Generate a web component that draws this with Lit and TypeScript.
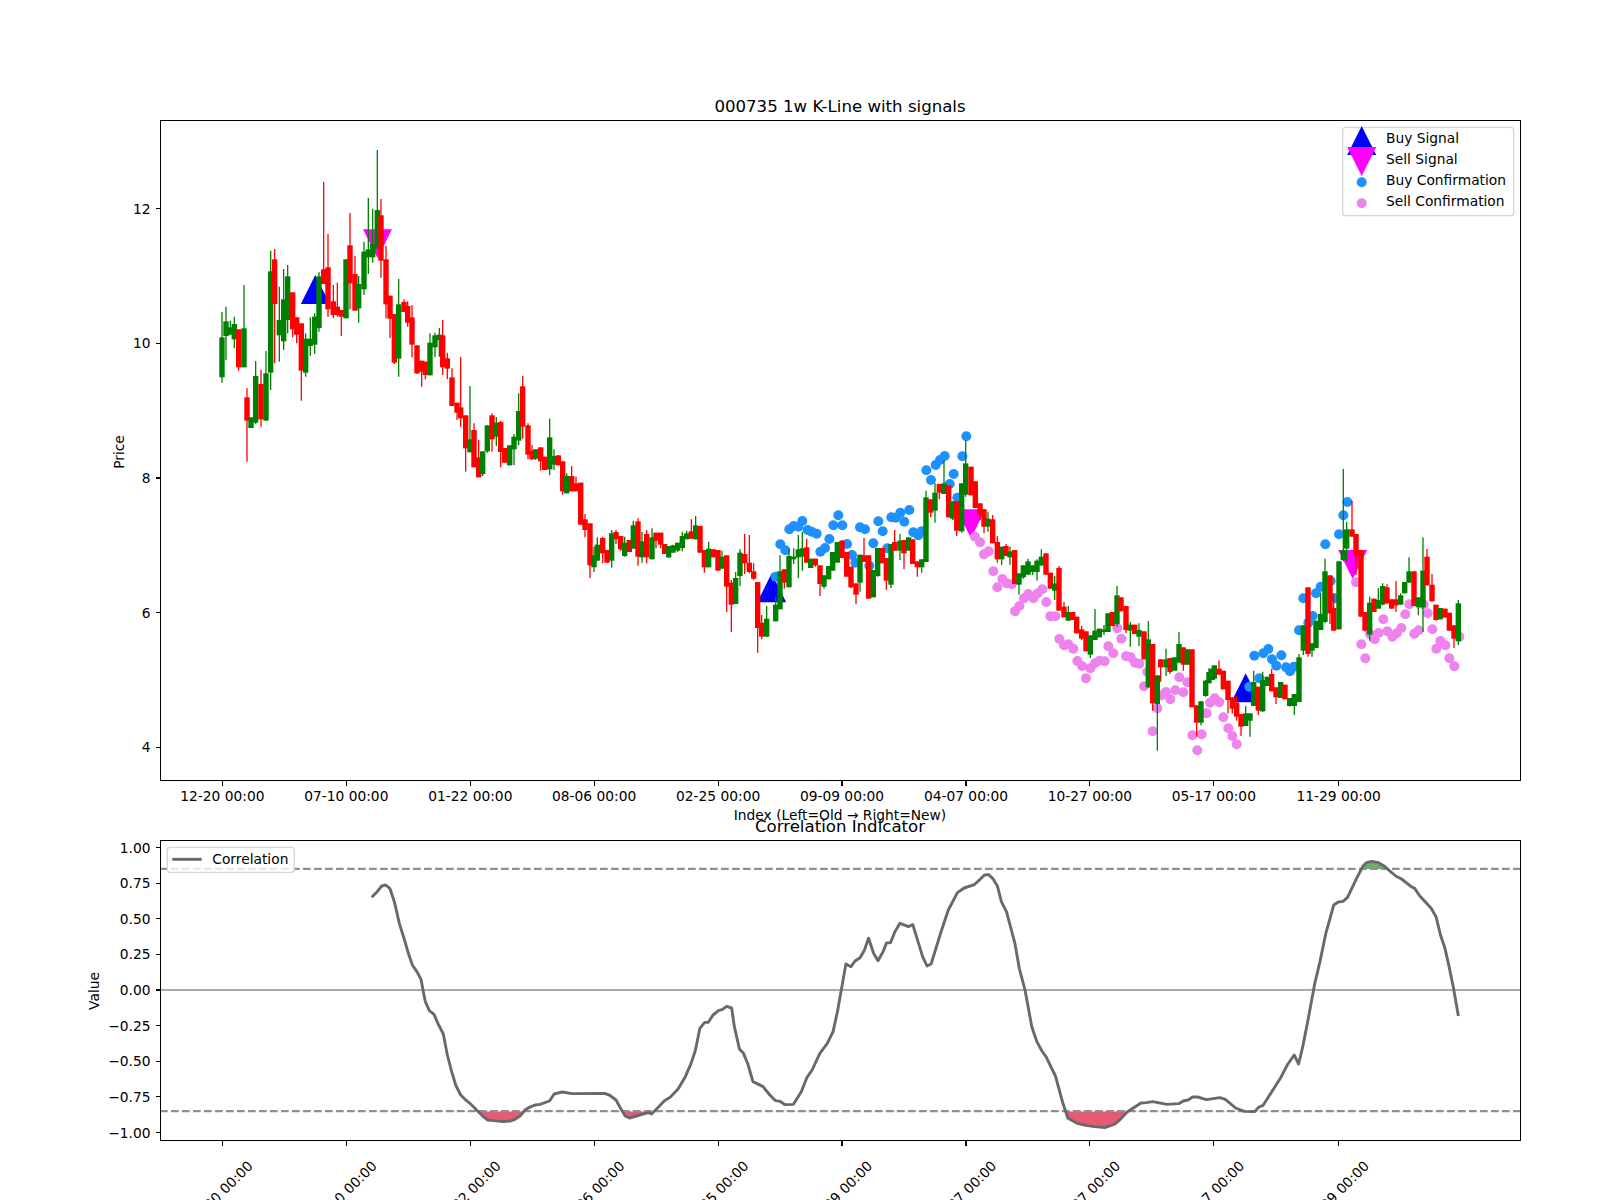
import { LitElement, html, svg, css } from "lit";
import { customElement } from "lit/decorators.js";

// candles read off the chart: colour, x, body top, body bottom, wick top, wick bottom
// coordinates are crop pixels (3x), x0/y0 is the crop origin
const CANDLE_CROPS = [
  {
    x0: 140,
    y0: 100,
    d: `g 246 712 832 636 848;g 258 664 708 620 780;g 271 682 704 662 706;g 283 672 718 650 745;r 296 688 802 688 812
g 312 685 802 555 802;r 321 892 962 865 1085;g 333 952 984 952 984;g 347 828 968 783 972;r 363 852 958 810 980
g 378 820 962 753 962;g 392 514 818 452 870;r 404 478 612 447 790;g 418 660 706 560 785;g 431 598 724 507 750
g 443 529 660 495 700;r 458 577 688 577 712;r 470 652 704 652 730;r 484 670 812 670 902;g 497 716 818 700 830
g 511 716 738 652 767;g 524 650 734 640 762;g 537 529 684 517 695;r 551 508 552 246 552;r 564 502 628 402 650
r 580 604 645 555 655;r 592 620 645 548 650;r 604 630 650 630 708;g 618 478 655 478 655;r 630 436 550 339 628
r 645 522 632 468 632;g 656 552 625 528 668;g 672 455 568 425 585;g 685 448 472 294 522;g 698 432 472 326 488
g 712 330 445 150 445;r 723 346 482 297 533;r 738 478 613 438 655;r 750 587 656 587 714;r 763 642 788 642 792
g 776 613 776 537 830;r 792 606 636 598 636;r 803 618 668 604 680;r 816 652 734 615 772;r 831 736 820 736 822
r 845 782 815 782 860;r 856 785 825 785 838;g 870 728 826 700 826;g 885 706 742 698 772;g 898 704 720 684 770
r 908 706 802 660 825;r 922 775 806 758 838;r 936 832 918 805 918;r 951 908 938 908 960;r 962 922 955 771 980`,
  },
  {
    x0: 200,
    y0: 330,
    d: `r 797 256 355 256 425;g 810 328 367 168 367;r 822 300 412 280 412;r 836 382 442 330 442;g 848 364 432 364 438
g 862 286 364 286 368;r 876 256 328 250 365;g 889 278 320 262 348;r 902 276 366 272 412;r 914 354 398 354 398
g 929 346 406 346 406;g 942 320 358 312 405;g 956 243 332 190 345;r 968 169 290 138 326;r 984 286 374 280 388
r 996 362 388 345 390;g 1007 358 386 358 390;r 1022 352 394 352 422;r 1034 380 420 380 420;g 1049 322 418 266 436
g 1062 378 404 358 420;r 1075 376 406 376 406;r 1088 394 484 394 494;g 1100 438 490 430 490;r 1115 438 484 408 484
r 1128 460 484 440 484;r 1142 458 584 458 584;r 1155 568 600 552 622;r 1170 580 706 580 744;g 1182 676 712 650 726
g 1192 644 692 622 692`,
  },
  {
    x0: 590,
    y0: 400,
    d: `r 38 414 460 410 490;r 51 450 488 450 488;g 65 400 482 390 503;r 78 396 418 390 432;r 92 408 448 408 452
g 104 428 468 410 470;r 118 420 456 420 456;g 130 376 446 362 446;r 144 364 470 355 497;g 156 424 472 395 488
r 170 402 472 390 490;g 186 412 478 385 478;r 198 398 422 398 445;r 212 398 434 398 445;r 224 432 462 432 462
g 236 438 472 438 474;g 249 436 458 434 458;g 263 428 452 428 456;g 277 408 444 395 454;g 290 400 418 392 418
r 304 394 416 358 416;g 317 376 418 348 418;r 330 378 458 378 458;r 343 450 502 450 518;g 356 446 502 425 502
r 370 448 472 448 472;r 384 450 512 450 512;g 396 470 506 452 506;r 410 466 560 466 636;r 424 548 614 540 696
g 437 534 612 516 612;g 450 458 528 448 558;r 464 462 490 402 522;r 478 488 516 405 520;r 491 514 536 490 540
r 503 546 684 546 758;r 515 668 710 645 718;g 530 656 710 618 710;g 557 614 664 590 664;g 570 514 628 465 628
r 583 508 548 508 566;g 597 468 562 448 562;g 611 470 478 445 492;g 625 448 472 405 534;g 637 445 470 395 512
r 650 442 488 416 488;g 662 476 504 476 504;r 676 476 496 476 500;r 690 496 552 496 588;g 702 526 560 526 566
g 716 498 538 498 538;g 728 456 512 456 512;g 742 426 488 426 488;r 756 422 474 420 474;r 770 456 530 456 530
r 783 500 562 500 565;r 798 550 584 550 612;g 810 464 548 464 575;r 822 466 486 414 486;r 836 466 596 466 596
g 850 510 592 510 592;g 863 444 528 444 530;r 877 444 490 444 490;r 889 474 542 474 570;g 903 432 554 432 564
r 914 426 452 390 452;g 930 422 452 402 480;r 942 420 460 420 508;g 956 412 452 412 452;r 968 418 492 418 492
r 982 484 502 484 530;g 995 478 502 478 518;g 1008 292 486 272 486;r 1022 298 338 298 352;g 1035 278 332 250 368
r 1048 252 278 252 298;g 1062 250 282 180 282;r 1076 256 352 256 352;g 1088 304 356 304 360;r 1100 304 392 304 408
g 1115 250 394 250 398;g 1127 190 284 120 290`,
  },
  {
    x0: 940,
    y0: 420,
    d: `r 93 140 226 140 226;r 106 184 264 184 264;r 120 250 284 250 300;r 132 268 320 268 340;g 144 296 320 276 335
r 158 298 370 285 370;r 172 366 418 348 428;g 185 380 418 380 435;r 198 378 408 372 408;g 210 394 412 380 435
r 224 390 492 390 492;g 237 460 494 460 524;g 250 436 472 436 476;g 264 424 464 416 464;g 278 436 456 436 465
g 291 422 456 418 482;g 304 410 436 388 438;r 318 400 464 400 464;r 331 458 506 458 506;g 344 490 512 468 540
r 357 444 572 438 572;r 372 560 592 545 592;g 385 576 602 558 602;r 398 576 600 576 600;r 410 590 640 590 640
r 425 628 656 618 660;r 438 634 694 634 694;g 451 646 704 646 714;g 465 632 660 567 660;g 478 626 652 626 652
g 492 628 636 615 645;g 504 580 636 580 636;r 517 576 618 576 618;g 531 526 612 498 620;r 543 532 574 532 574
r 558 558 630 558 640;g 571 614 632 606 680;r 584 614 642 614 642;g 597 630 650 610 678;r 612 634 718 634 718
g 625 658 802 603 804;r 638 672 850 672 872;g 652 766 852 766 992;r 662 718 742 718 785;g 678 718 742 686 768
r 690 714 756 714 762;g 704 712 752 712 752;g 717 672 728 636 730;r 730 682 734 682 752;g 742 688 734 688 734
r 756 688 862 688 862;r 770 856 908 856 950;g 783 844 908 844 916;g 797 782 828 780 830;g 807 756 790 745 790
g 815 746 780 746 780;g 823 736 776 736 780;r 837 746 764 722 764`,
  },
  {
    x0: 1180,
    y0: 450,
    d: `r 130 662 718 662 718;r 144 692 750 692 790;r 157 742 776 742 790;r 170 758 800 738 812;r 183 792 830 792 858
g 197 790 828 768 828;g 210 790 812 790 860;g 221 696 768 662 768;r 235 710 782 710 795;g 248 690 784 665 786
g 262 680 708 680 708;r 275 672 724 656 724;r 288 712 742 712 762;g 302 696 744 696 744;r 315 704 748 704 748
g 329 744 768 744 770;g 343 732 768 732 795;g 357 622 756 612 756;g 370 526 602 526 615;r 384 412 612 412 620
g 396 580 602 580 620;g 408 512 594 512 594;g 422 492 540 430 540;g 435 364 516 326 520;r 450 376 490 376 522
r 461 474 542 430 542;g 477 334 538 334 538;g 490 300 330 57 334;g 500 238 296 216 335;r 516 238 260 153 260
r 528 252 318 252 375;r 543 300 500 300 500;r 555 486 542 486 545;g 569 458 554 440 572;r 582 446 486 446 486
g 595 450 476 415 476;g 608 408 464 400 466;r 621 412 460 403 462;r 635 448 476 448 476;r 648 448 466 393 486
g 662 436 464 430 464;g 674 396 430 396 430;g 687 364 398 322 398;r 702 364 468 364 468;g 715 442 472 442 496
g 729 362 472 262 546;r 741 320 406 297 406;r 756 404 454 372 454;r 768 464 510 464 512;g 781 474 508 474 508
r 795 476 502 476 504;r 808 488 542 488 542;r 822 526 566 526 594;g 835 460 574 450 585`,
  },
];

type Candle = { up: boolean; x: number; top: number; bottom: number; wickTop: number; wickBottom: number };

const candles: Candle[] = CANDLE_CROPS.flatMap((crop) =>
  crop.d
    .split(/[\n;]+/)
    .map((row) => row.trim().split(" "))
    .map(([c, x, top, bottom, wt, wb]) => ({
      up: c === "r",
      x: crop.x0 + Number(x) / 3,
      top: crop.y0 + Number(top) / 3,
      bottom: crop.y0 + Number(bottom) / 3,
      wickTop: crop.y0 + Number(wt) / 3,
      wickBottom: crop.y0 + Number(wb) / 3,
    }))
);

function pts(x0: number, y0: number, d: string, f = 1): [number, number][] {
  return d
    .trim()
    .split(/\s+/)
    .map((p) => p.split(","))
    .map(([x, y]) => [x0 + (Number(x) * f) / 3, y0 + Number(y) / 3] as [number, number]);
}

const buyDots = [
  ...pts(590, 400, `557,530 571,433 586,451 598,388 611,378 625,380 637,363 653,390 665,395 680,401 691,455 705,444 718,417
    730,376 745,346 757,376 771,432 786,465 796,488 810,382 825,388 838,497 850,430 865,364 878,394 892,445 904,352 917,353
    931,338 943,365 958,330 970,397 985,406 995,394 1009,211 1023,240 1037,195 1050,180 1064,168 1079,252 1091,222 1102,293
    1117,169 1129,109`),
  ...pts(1180, 450, `208,710 238,685 223,617 250,610 265,597 276,628 289,647 304,616 318,652 330,664 342,650 357,541 370,445
    385,518 398,498 408,430 422,410 452,393 465,445 436,283 477,253 490,196 502,156`),
];

const sellDots = [
  ...pts(940, 420, `105,350 120,367 132,403 146,394 160,454 172,502 187,477 200,490 215,493 225,574 238,558 252,535 265,522
    280,535 293,520 307,508 319,546 331,589 346,589 358,657 372,676 385,673 400,686 412,723 426,738 438,775 451,745 465,730
    478,722 494,724 505,679 520,700 532,625 544,656 558,709 572,712 585,728 598,731 612,799 622,756 638,934 652,865 665,826
    678,816 691,838 706,811 718,772 730,817 742,787 757,946 772,991 785,943 800,880 810,848 824,835 838,847 850,892 865,925
    877,948 890,973`),
  ...pts(1180, 450, `528,397 544,583 556,625 570,552 584,568 596,549 610,508 622,544 637,560 650,550 664,534 676,493 688,463
    703,551 716,541 731,463 743,490 757,538 769,596 781,573 796,586 808,625 823,649 838,560`),
];

// correlation curve, same crop idea (the two right crops came back slightly narrowed)
const curve = [
  ...pts(60, 770, `935,382 950,367 965,348 977,345 990,356 1003,395 1018,460 1035,515 1045,550 1057,585 1072,607 1083,628
    1090,665 1096,695 1108,722 1122,733 1135,763 1150,792 1162,855 1175,905 1187,945 1202,975 1215,988 1232,1002 1250,1020
    1270,1040 1283,1050 1300,1052 1330,1055 1350,1053 1365,1048 1380,1038 1395,1020 1408,1012 1425,1005 1440,1003`),
  ...pts(540, 770, `28,993 42,972 65,966 95,971 190,970 205,975 225,990 240,1018 252,1038 265,1044 295,1035 320,1028 330,1032
    350,1012 368,992 385,982 408,958 430,920 447,880 460,840 473,775 487,757 498,757 512,735 528,722 540,718 552,709 567,714
    575,770 590,837 602,850 615,882 630,935 660,950 680,975 697,992 710,994 725,1004 750,1003 773,965 790,922 805,900 828,850
    850,820 867,785 880,725 895,640 905,582 920,590 932,573 947,563 960,540 972,505 987,550 1000,572 1015,545 1025,519
    1037,518 1050,485 1065,460 1090,470 1103,464 1120,520 1132,560 1145,588 1157,582 1170,540 1185,490 1208,420 1235,368
    1255,354 1285,344 1300,330 1315,315 1327,314 1340,326 1353,347 1365,395 1380,425 1392,470 1405,520 1418,595 1435,660
    1455,770 1470,815 1485,843 1497,860 1525,918 1547,1000 1562,1045`, 1.014),
  ...pts(1060, 770, `50,1060 75,1066 100,1070 130,1073 160,1062 178,1045 195,1026 235,999 250,998 270,995 310,1003 345,1001
    358,993 372,990 385,981 400,981 425,989 465,983 480,988 510,1014 535,1024 565,1025 578,1011 590,1006 615,965 640,925
    660,885 680,855 693,882 705,830 722,740 740,640 755,575 772,490 795,405 808,396 822,394 835,382 860,328 880,288 890,278
    905,274 925,278 940,287 960,305 975,318 992,327 1020,350 1030,355 1045,378 1078,415 1092,440 1105,495 1118,535 1130,590
    1142,650 1157,738`, 1.033),
];

const TICKS = [222.4, 346.3, 470.3, 594.2, 718.1, 842, 966, 1089.9, 1213.8, 1338.7];
const TICK_LABELS = [
  "12-20 00:00", "07-10 00:00", "01-22 00:00", "08-06 00:00", "02-25 00:00",
  "09-09 00:00", "04-07 00:00", "10-27 00:00", "05-17 00:00", "11-29 00:00",
];
const PRICE_TICKS = [12, 10, 8, 6, 4];
const VALUE_TICKS = [1, 0.75, 0.5, 0.25, 0, -0.25, -0.5, -0.75, -1];

const priceY = (p: number) => 343.3 + (10 - p) * 67.35;
const valueY = (v: number) => 990 - v * 142.5;
const Y_HIGH = valueY(0.85);
const Y_LOW = valueY(-0.85);

const TRI = 14.5;
const up = (x: number, apex: number) => `${x - TRI},${apex + 29} ${x + TRI},${apex + 29} ${x},${apex}`;
const down = (x: number, top: number) => `${x - TRI},${top} ${x + TRI},${top} ${x},${top + 29}`;

const fmt = (v: number) => (v < 0 ? "\u2212" : "") + Math.abs(v).toFixed(2);

@customElement("app-root")
export class AppRoot extends LitElement {
  static styles = css`
    :host {
      display: block;
      width: 1600px;
      height: 1200px;
      background: #fff;
      overflow: hidden;
    }
    svg {
      display: block;
    }
    text {
      font-family: "DejaVu Sans", sans-serif;
      font-size: 13.8px;
      fill: #000;
    }
    .title {
      font-size: 16.6px;
    }
    .mid {
      text-anchor: middle;
    }
    .end {
      text-anchor: end;
    }
    .frame {
      fill: none;
      stroke: #000;
      stroke-width: 1.1;
      shape-rendering: crispEdges;
    }
    .tick {
      stroke: #000;
      stroke-width: 1.1;
      shape-rendering: crispEdges;
    }
    .red-f {
      fill: #f00;
    }
    .green-f {
      fill: #008000;
    }
    .red-s {
      stroke: #f00;
      stroke-width: 1.3;
    }
    .green-s {
      stroke: #008000;
      stroke-width: 1.3;
    }
    .buy-signal {
      fill: #00f;
    }
    .sell-signal {
      fill: #f0f;
    }
    .buy-dot {
      fill: #1e90ff;
    }
    .sell-dot {
      fill: #ee82ee;
    }
    .legend {
      fill: rgba(255, 255, 255, 0.8);
      stroke: #d6d6d6;
      stroke-width: 1.3;
    }
    .corr {
      fill: none;
      stroke: #696969;
      stroke-width: 2.9;
      stroke-linejoin: round;
    }
    .zero {
      stroke: #aaa;
      stroke-width: 2;
    }
    .dash {
      stroke: #8f8f8f;
      stroke-width: 2.1;
      stroke-dasharray: 7.7 3.3;
    }
    .fill-low {
      fill: #dc143c;
      fill-opacity: 0.7;
    }
    .fill-high {
      fill: #008000;
      fill-opacity: 0.6;
    }
  `;

  private renderKline() {
    return svg`
      <polygon class="buy-signal" points=${up(315.3, 275)}></polygon>
      <polygon class="buy-signal" points=${up(771.7, 573.3)}></polygon>
      <polygon class="buy-signal" points=${up(1245.7, 673.3)}></polygon>
      <polygon class="sell-signal" points=${down(377.5, 229.3)}></polygon>
      <polygon class="sell-signal" points=${down(971, 509.3)}></polygon>
      <polygon class="sell-signal" points=${down(1352.7, 550)}></polygon>
      ${buyDots.map(([x, y]) => svg`<circle class="buy-dot" cx=${x} cy=${y} r="5"></circle>`)}
      ${sellDots.map(([x, y]) => svg`<circle class="sell-dot" cx=${x} cy=${y} r="5"></circle>`)}
      ${candles.map(
        (c) => svg`<rect class=${c.up ? "red-f" : "green-f"} x=${c.x - 2.7} y=${c.top} width="5.4" height=${c.bottom - c.top}></rect>`
      )}
      ${candles.map(
        (c) => svg`<line class=${c.up ? "red-s" : "green-s"} x1=${c.x} x2=${c.x} y1=${c.wickTop} y2=${c.wickBottom}></line>`
      )}
      <rect class="frame" x="160.5" y="120.5" width="1360" height="660"></rect>
      ${TICKS.map(
        (x, i) => svg`
          <line class="tick" x1=${x} x2=${x} y1="781" y2="785.5"></line>
          <text class="mid" x=${x} y="801">${TICK_LABELS[i]}</text>`
      )}
      ${PRICE_TICKS.map(
        (p) => svg`
          <line class="tick" x1="155.5" x2="160" y1=${priceY(p)} y2=${priceY(p)}></line>
          <text class="end" x="150.5" y=${priceY(p) + 5}>${p}</text>`
      )}
      <text class="title mid" x="840" y="112">000735 1w K-Line with signals</text>
      <text class="mid" x="840" y="820">Index (Left=Old → Right=New)</text>
      <text class="mid" transform="translate(124 452) rotate(-90)">Price</text>
      <rect class="legend" x="1342.7" y="127.3" width="171" height="88.4" rx="3"></rect>
      <polygon class="buy-signal" points=${up(1361.7, 126)}></polygon>
      <polygon class="sell-signal" points=${down(1361.7, 147)}></polygon>
      <circle class="buy-dot" cx="1361.7" cy="182.3" r="5"></circle>
      <circle class="sell-dot" cx="1361.7" cy="203.3" r="5"></circle>
      <text x="1386" y="143.3">Buy Signal</text>
      <text x="1386" y="164.3">Sell Signal</text>
      <text x="1386" y="185.3">Buy Confirmation</text>
      <text x="1386" y="205.8">Sell Confirmation</text>
    `;
  }

  private renderCorrelation() {
    const line = curve.map(([x, y]) => `${x},${y}`).join(" ");
    const first = curve[0][0];
    const last = curve[curve.length - 1][0];
    return svg`
      <defs>
        <clipPath id="below"><rect x="160" y=${Y_LOW} width="1360" height=${1140 - Y_LOW}></rect></clipPath>
        <clipPath id="above"><rect x="160" y="840" width="1360" height=${Y_HIGH - 840}></rect></clipPath>
      </defs>
      <polygon class="fill-low" clip-path="url(#below)" points="${line} ${last},${Y_LOW} ${first},${Y_LOW}"></polygon>
      <polygon class="fill-high" clip-path="url(#above)" points="${line} ${last},${Y_HIGH} ${first},${Y_HIGH}"></polygon>
      <line class="zero" x1="160" x2="1520" y1="990" y2="990"></line>
      <line class="dash" x1="160" x2="1520" y1=${Y_HIGH} y2=${Y_HIGH}></line>
      <line class="dash" x1="160" x2="1520" y1=${Y_LOW} y2=${Y_LOW}></line>
      <polyline class="corr" points=${line}></polyline>
      <rect class="frame" x="160.5" y="840.5" width="1360" height="300"></rect>
      ${TICKS.map(
        (x, i) => svg`
          <line class="tick" x1=${x} x2=${x} y1="1141" y2="1145.5"></line>
          <text class="mid" transform="translate(${x - 2} 1198) rotate(-45 0 -5)">${TICK_LABELS[i]}</text>`
      )}
      ${VALUE_TICKS.map(
        (v) => svg`
          <line class="tick" x1="155.5" x2="160" y1=${valueY(v)} y2=${valueY(v)}></line>
          <text class="end" x="150.5" y=${valueY(v) + 5}>${fmt(v)}</text>`
      )}
      <text class="title mid" x="840" y="831.5">Correlation Indicator</text>
      <text class="mid" transform="translate(98.5 991) rotate(-90)">Value</text>
      <rect class="legend" x="167.3" y="847.3" width="127" height="25" rx="3"></rect>
      <line class="corr" x1="172.3" x2="201.7" y1="859.3" y2="859.3"></line>
      <text x="212.3" y="864">Correlation</text>
    `;
  }

  render() {
    return html`
      <svg width="1600" height="1200" viewBox="0 0 1600 1200" xmlns="http://www.w3.org/2000/svg">
        ${this.renderKline()} ${this.renderCorrelation()}
      </svg>
    `;
  }
}
